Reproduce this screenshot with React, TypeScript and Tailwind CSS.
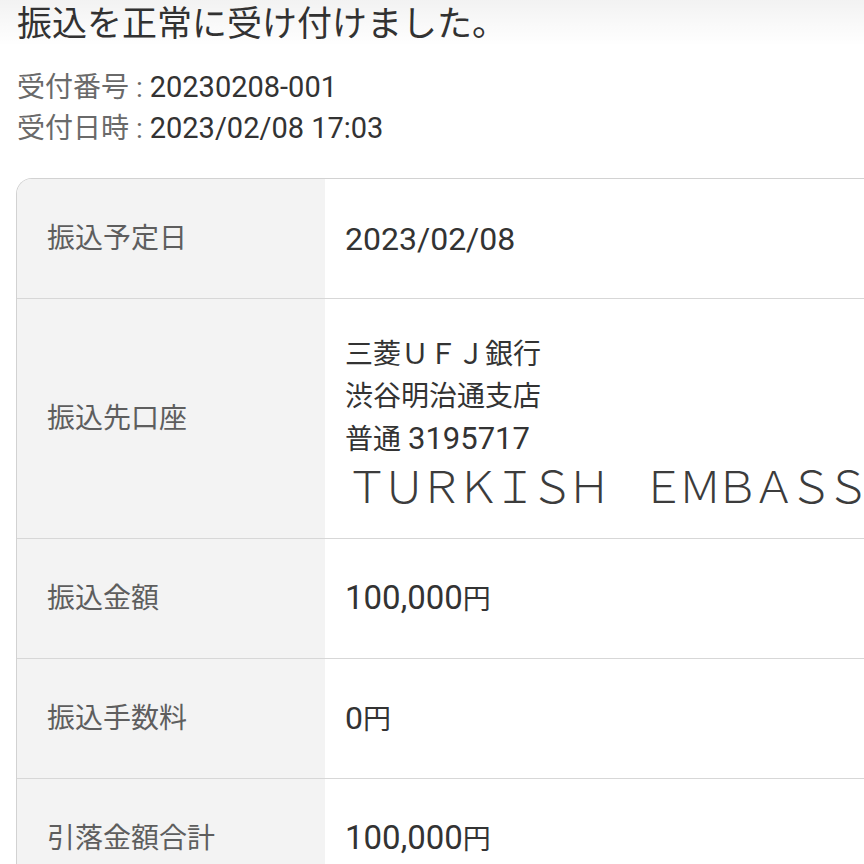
import React from "react";

const F = "font-[Roboto,'Noto_Sans_CJK_JP',sans-serif]";

function Row({
  label,
  children,
  tall,
  last,
}: {
  label: string;
  children: React.ReactNode;
  tall?: boolean;
  last?: boolean;
}) {
  return (
    <div
      className={`flex ${last ? "" : "border-b border-[#d7d7d7]"} ${
        tall ? "min-h-[240px]" : "h-[120px]"
      }`}
    >
      <div className="w-[308px] shrink-0 bg-[#f3f3f3] flex items-center pl-[30px] text-[28px] leading-[42px] text-[#5e5e5e]">
        {label}
      </div>
      <div className="flex-1 flex flex-col justify-center pl-[20px] text-[28px] leading-[42px] text-[#333333] bg-white">
        {children}
      </div>
    </div>
  );
}

export default function App() {
  return (
    <div className={`relative w-[864px] h-[864px] overflow-hidden bg-white ${F}`}>
      <div className="pointer-events-none absolute left-0 top-0 w-full h-[46px] bg-gradient-to-b from-black/[0.05] to-transparent" />
      <div className="pl-[17px] pt-[4px]">
        <h1 className="text-[35px] leading-[42px] text-[#333333] font-normal">
          振込を正常に受け付けました。
        </h1>
        <div className="mt-[21px] flex flex-col text-[28px] leading-[41px]">
          <div>
            <span className="text-[#6a6a6a]">受付番号 : </span>
            <span className="text-[#333333] text-[29px]">20230208-001</span>
          </div>
          <div>
            <span className="text-[#6a6a6a]">受付日時 : </span>
            <span className="text-[#333333] text-[29px]">2023/02/08 17:03</span>
          </div>
        </div>
      </div>
      <div className="ml-[16px] mt-[29px] w-[960px] border-l border-t border-[#d2d2d2] rounded-tl-[16px] overflow-hidden">
        <Row label="振込予定日">
          <span className="text-[32px]">2023/02/08</span>
        </Row>
        <Row label="振込先口座" tall>
          <div className="pt-[35px] pb-[31px]">
            <div>三菱ＵＦＪ銀行</div>
            <div>渋谷明治通支店</div>
            <div>
              普通 <span className="text-[31px]">3195717</span>
            </div>
            <div className="font-['Noto_Sans_CJK_JP_Light','Noto_Sans_CJK_JP_DemiLight','Noto_Sans_CJK_JP',sans-serif] text-[44px] tracking-[-7px] leading-[46px] font-extralight text-[#3c3c3c] whitespace-nowrap">
              ＴＵＲＫＩＳＨ　ＥＭＢＡＳＳＹ
            </div>
          </div>
        </Row>
        <Row label="振込金額">
          <span>
            <span className="text-[33px]">100,000</span>円
          </span>
        </Row>
        <Row label="振込手数料">
          <span>
            <span className="text-[32px]">0</span>円
          </span>
        </Row>
        <Row label="引落金額合計" last>
          <span>
            <span className="text-[33px]">100,000</span>円
          </span>
        </Row>
      </div>
    </div>
  );
}
